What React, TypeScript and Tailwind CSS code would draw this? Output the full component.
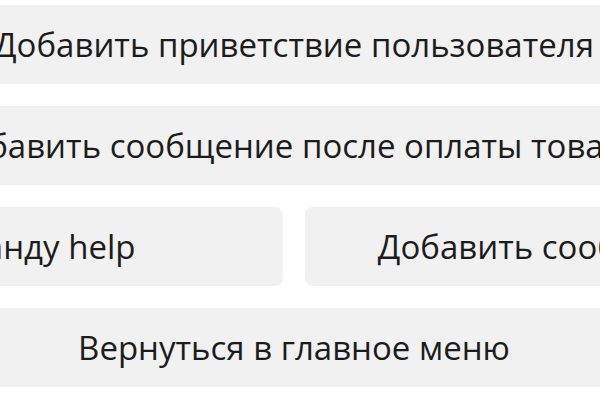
export default function App() {
  const btn =
    "h-[79px] bg-[#f1f1f1] rounded-[8px] flex items-center justify-center text-[33px] text-[#1c1c1c] whitespace-nowrap overflow-hidden";
  return (
    <div className="w-[600px] h-[400px] bg-white overflow-hidden" style={{ fontFamily: '"Open Sans", sans-serif' }}>
      <div className="w-[1374px] ml-[-393px] pt-[5px] flex flex-col gap-[22px]">
        <div className={btn}>Добавить приветствие пользователя</div>
        <div className={btn}>Добавить сообщение после оплаты товара</div>
        <div className="flex gap-[22px]">
          <div className={btn + " flex-1"}>Изменить команду help</div>
          <div className={btn + " flex-1"}>Добавить сообщение при старте</div>
        </div>
        <div className={btn}>Вернуться в главное меню</div>
      </div>
    </div>
  );
}
